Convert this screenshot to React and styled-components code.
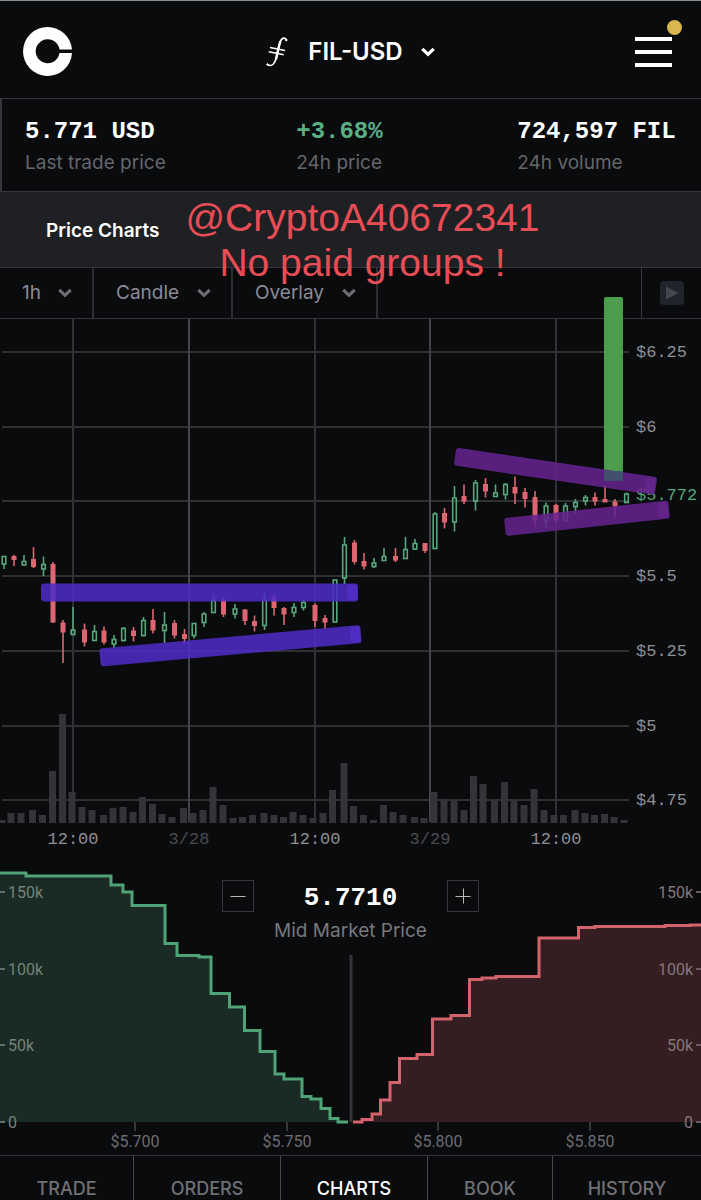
import React from 'react';
import styled, { createGlobalStyle, css } from 'styled-components';

const GlobalStyle = createGlobalStyle`
  * {
    box-sizing: border-box;
  }

  body {
    margin: 0;
    background: #0a0b0d;
    color: #fff;
    font-family: Inter, 'Liberation Sans', sans-serif;
  }

  button, select {
    padding: 0;
    border: none;
    background: none;
    color: inherit;
    font: inherit;
    cursor: pointer;
  }
`;

const Page = styled.div`
  width: 100%;
  overflow: hidden;
`;

const Header = styled.header`
  display: grid;
  grid-template-columns: 1fr auto 1fr;
  align-items: center;
  height: 98px;
  padding: 4px 23px 0;
  border-top: 1px solid #8c9092;
`;

const HomeLink = styled.a`
  display: flex;
  justify-self: start;
`;

const MarketButton = styled.button`
  display: flex;
  align-items: center;
  gap: 18px;
  font-size: 24px;
  line-height: 32px;
  font-weight: 600;
`;

const MarketName = styled.span`
  display: flex;
  align-items: center;
  gap: 20px;
`;

const MenuButton = styled.button`
  position: relative;
  display: flex;
  flex-direction: column;
  gap: 9px;
  width: 37px;
  margin-right: 6px;
  justify-self: end;
`;

const MenuLine = styled.span`
  width: 100%;
  height: 4px;
  background: #fff;
`;

const Badge = styled.span`
  position: absolute;
  top: -17px;
  right: -10px;
  width: 15px;
  height: 15px;
  border-radius: 50%;
  background: #d8b750;
`;

const Stats = styled.section`
  display: grid;
  grid-template-columns: 27fr 22fr 16fr;
  height: 94px;
  padding: 16px 23px 0;
  border: 1px solid #36373c;
  border-left-width: 2px;
  border-right: none;
`;

const StatValue = styled.div`
  font-family: 'Liberation Mono', monospace;
  font-size: 24px;
  line-height: 34px;
  font-weight: bold;
  white-space: nowrap;
  color: ${(props) => (props.$up ? '#5bb083' : '#fff')};
`;

const StatLabel = styled.div`
  font-size: 19px;
  line-height: 28px;
  color: #65666a;
`;

const TitleBar = styled.section`
  position: relative;
  z-index: 1;
  display: flex;
  align-items: center;
  height: 75px;
  padding: 2px 46px 0;
  background: #1f2024;
`;

const Title = styled.h1`
  margin: 0;
  font-size: 19px;
  line-height: 24px;
  font-weight: 600;
`;

const Watermark = styled.p`
  position: absolute;
  top: 3px;
  left: 24px;
  right: 0;
  margin: 0;
  text-align: center;
  font-family: 'Liberation Sans', sans-serif;
  font-size: 39px;
  line-height: 45px;
  color: #e84d56;
  pointer-events: none;
`;

const Toolbar = styled.div`
  display: flex;
  height: 52px;
  border-top: 1px solid #36373c;
  border-bottom: 1px solid #36373c;
`;

const Picker = styled.label`
  display: flex;
  align-items: center;
  gap: 17px;
  padding: 0 20px 0 22px;
  border-right: 2px solid #2d2e33;
  font-size: 19px;
  color: #8a8b96;
`;

const PickerSelect = styled.select`
  appearance: none;
  line-height: 24px;
  outline: none;
`;

const PlayButton = styled.button`
  display: flex;
  align-items: center;
  justify-content: center;
  width: 60px;
  margin-left: auto;
  border-left: 1px solid #36373c;
`;

const ChartSvg = styled.svg`
  position: relative;
  display: block;
  width: 100%;
  height: auto;
  overflow: visible;
`;

const AxisText = styled.text`
  font-family: 'Liberation Mono', monospace;
  font-size: 17px;
  fill: #8f9097;

  ${(props) => props.$dim && css`
    fill: #4b4c51;
  `}

  ${(props) => props.$live && css`
    fill: #55a87b;
  `}
`;

const DepthPanel = styled.section`
  display: grid;
`;

const DepthSvg = styled.svg`
  grid-area: 1 / 1;
  display: block;
  width: 100%;
  height: auto;
`;

const DepthText = styled.text`
  font-family: Roboto, sans-serif;
  font-size: 16px;
  fill: ${(props) => props.$fill || '#6c6d73'};
`;

const MidMarket = styled.div`
  grid-area: 1 / 1;
  justify-self: center;
  align-self: start;
  display: flex;
  flex-direction: column;
  align-items: center;
  gap: 3px;
  padding-top: 20px;
`;

const MidRow = styled.div`
  display: flex;
  align-items: flex-start;
  gap: 50px;
`;

const ZoomButton = styled.button`
  display: flex;
  align-items: center;
  justify-content: center;
  width: 32px;
  height: 32px;
  border: 1px solid #36373c;
`;

const MidPrice = styled.output`
  font-family: 'Liberation Mono', monospace;
  font-size: 26px;
  line-height: 36px;
  font-weight: bold;
`;

const MidLabel = styled.div`
  font-size: 19px;
  line-height: 24px;
  color: #77787c;
`;

const Tabs = styled.nav`
  display: grid;
  grid-template-columns: 133fr 147fr 147fr 125fr 149fr;
  border-top: 1px solid #36373c;
`;

const Tab = styled.a`
  padding-top: 22px;
  text-align: center;
  text-decoration: none;
  font-size: 18px;
  line-height: 22px;
  font-weight: 500;
  color: ${(props) => (props.$active ? '#fff' : '#707175')};

  & + & {
    border-left: 1px solid #46474b;
  }
`;

const UP = '#57a87d';
const DOWN = '#de6670';

// [x, high, low, bodyTop, bodyBottom, up]
const candles = [
  [4, 556, 569, 556, 564, 1],
  [14, 555, 566, 556, 560, 0],
  [24, 555, 565, 561, 565, 1],
  [33.5, 547, 568, 559, 567, 0],
  [43.5, 556.5, 576, 564, 569, 1],
  [53, 562, 623, 564, 622.5, 0],
  [63, 620, 663, 622.5, 632.5, 0],
  [73, 607, 634, 629.5, 634.5, 1],
  [84.5, 623.5, 646.5, 629.5, 642.5, 0],
  [94.5, 625, 641, 631, 640.5, 1],
  [104, 626.5, 644.5, 630.5, 642.5, 0],
  [114, 635, 648, 639, 644, 1],
  [123.5, 627, 641.5, 628, 640.5, 1],
  [133.5, 627, 641.5, 630.5, 636, 0],
  [143.5, 617, 636.5, 620, 635.5, 1],
  [153, 609, 633.5, 620, 630.5, 0],
  [164.5, 612, 643.5, 624.5, 630.5, 1],
  [174.5, 620, 638.5, 623, 635.5, 0],
  [184.5, 629, 644.5, 634, 639, 0],
  [194, 623, 638.5, 623, 635.5, 1],
  [204, 612, 627, 613.5, 622.5, 1],
  [213.5, 594, 612, 600, 612.5, 1],
  [223.5, 598, 617, 600, 614.5, 0],
  [235, 604, 618.5, 608.5, 614, 1],
  [245, 609, 625, 609.5, 621, 0],
  [254.5, 615.5, 631.5, 621, 626, 0],
  [264.5, 592.5, 630, 599.5, 625.5, 1],
  [274, 594, 615.5, 597.5, 608, 0],
  [284, 607, 625, 608, 614.5, 0],
  [294, 603, 617, 607, 612.5, 1],
  [303.5, 600, 610.5, 602, 607.5, 1],
  [315, 603.5, 627, 605, 621, 0],
  [325, 615, 629, 618, 622.5, 0],
  [335, 579.5, 622, 579.5, 622, 1],
  [344.5, 537, 584, 544.5, 578, 1],
  [354.5, 540, 564.5, 542.5, 562, 0],
  [364, 553, 569.5, 561, 566.5, 0],
  [374, 558, 568, 562.5, 566.5, 1],
  [384, 548, 560, 556, 560.5, 1],
  [395.5, 548, 562, 556, 560.5, 0],
  [405.5, 537, 558, 549, 558.5, 1],
  [415, 539, 550, 543, 549, 1],
  [425, 543, 553, 543, 551, 0],
  [435, 512, 548, 513.5, 548.5, 1],
  [444.5, 508, 528.5, 513, 522.5, 0],
  [454.5, 486, 531.5, 497.5, 522, 1],
  [464, 484.5, 504, 496, 501.5, 0],
  [475.5, 480, 510.5, 482.5, 501, 1],
  [485.5, 478, 497.5, 484, 491.5, 0],
  [495.5, 484.5, 496, 492.5, 496.5, 1],
  [505.5, 483, 499.5, 484, 494.5, 1],
  [515, 476.5, 504, 487, 493.5, 0],
  [525, 488, 507.5, 492, 499, 0],
  [535, 491, 526.5, 497, 520.5, 0],
  [546, 502.5, 528, 505.5, 520.5, 1],
  [556, 504, 523, 505, 520.5, 0],
  [565.5, 503, 520, 505.5, 520.5, 1],
  [575.5, 499, 514, 502, 506.5, 1],
  [585.5, 495, 505.5, 497, 501, 1],
  [595, 492.5, 505.5, 497, 501.5, 0],
  [605, 485, 502, 499, 502.5, 0],
  [615, 499, 517, 501.5, 506.5, 0],
  [626.5, 492.5, 502, 493.5, 502.5, 1],
];

// [x, top]
const volumes = [
  [2, 820], [11, 813], [21, 813], [32.5, 810], [42.5, 815], [52.5, 771],
  [62.5, 714], [72, 792], [82, 807], [92, 810], [103.5, 815], [113, 808],
  [123, 807], [133, 812], [142.5, 797], [152.5, 804], [162, 814], [172, 817],
  [183.5, 808], [193, 813], [203, 810], [213, 787], [223, 805], [233, 818],
  [242.5, 817], [252.5, 815], [264, 813], [274, 815], [283.5, 817], [293, 812],
  [303, 815], [313, 818], [323, 813], [332.5, 790], [344, 763], [353.5, 806],
  [363.5, 815], [373.5, 820], [383.5, 805], [393, 812], [403, 815], [414.5, 817],
  [424, 818], [434, 792], [444, 799], [454, 800], [464, 810], [473.5, 776],
  [483, 784], [494.5, 800], [504.5, 782], [514, 800], [524, 805], [534, 789],
  [544, 810], [554, 815], [563.5, 815], [575, 810], [585, 813], [594.5, 815],
  [604.5, 814], [614, 817], [624, 820],
];

const priceLines = [
  [352, '$6.25'],
  [427, '$6'],
  [501, null],
  [576, '$5.5'],
  [651, '$5.25'],
  [726, '$5'],
  [800, '$4.75'],
];

const timeLines = [
  [73, '12:00', false],
  [189, '3/28', true],
  [315, '12:00', false],
  [430, '3/29', true],
  [556, '12:00', false],
];

const bids = 'M0 873H26V876H111V885H123V892H132V905.5H165V943.5H177V955.5H199V957H211V993.5H229.5V1007H244.5V1030.5H260V1051.5H275V1074H284V1079H302V1096.5H311V1099H321V1108.5H330V1118.5H338V1122H348';
const asks = 'M353 1122H362V1119.5H372V1114H380.5V1100H390V1082.5H399.5V1058.5H417V1054.5H432.5V1019H451V1015.5H469.5V979.5H482V978H496V976.5H539V938H578.5V927.5H595V926.5H665V925.5H690V925H701';

const depthLevels = [
  [892, '150k'],
  [969, '100k'],
  [1045, '50k'],
  [1122, '0'],
];

const depthPrices = [
  [135, '$5.700'],
  [287, '$5.750'],
  [438, '$5.800'],
  [590, '$5.850'],
];

const tabs = ['TRADE', 'ORDERS', 'CHARTS', 'BOOK', 'HISTORY'];

const Chevron = ({ color }) => (
  <svg width="14" height="10" viewBox="0 0 14 10" fill="none" aria-hidden="true">
    <path d="M1.3 1.8 7 7.3l5.7-5.5" stroke={color} strokeWidth="3.2" />
  </svg>
);

const Logo = () => (
  <svg width="49" height="49" viewBox="0 0 49 49" aria-hidden="true">
    <path
      fill="#fff"
      d="M24.5 0A24.5 24.5 0 1 0 49 26H36.5a12 12 0 1 1 0-3.500H49A24.500 24.500 0 0 0 24.500 0Z"
    />
  </svg>
);

const FilecoinIcon = () => (
  <svg width="22" height="32" viewBox="0 0 22 32" fill="none" stroke="#fff" strokeLinecap="round" aria-hidden="true">
    <path d="M20.3 4.500C20 1.200 15.800.8 13.900 6.500 12.500 10.800 11.600 16 10.400 21.200 9 27.300 6.200 31.500 1.300 28.500" strokeWidth="1.6" />
    <path d="M14.2 6C12.700 10.800 11.600 16 10.200 22.500" strokeWidth="2.4" />
    <path d="M4 11.500l15 3M2.700 15.800l15 3" strokeWidth="1.6" strokeLinecap="butt" />
    <circle cx="20.2" cy="4" r=".7" fill="#fff" />
    <circle cx="1.5" cy="28.4" r=".7" fill="#fff" />
  </svg>
);

const PlayIcon = () => (
  <svg width="26" height="26" viewBox="0 0 26 26" aria-hidden="true">
    <rect x="1" y="1" width="24" height="24" rx="4" fill="#20252b" />
    <path d="M7 6.5 19.5 13 7 19.5Z" fill="#44474b" />
  </svg>
);

const Candle = ({ data }) => {
  const [x, high, low, top, bottom, up] = data;
  if (up) {
    return (
      <g stroke={UP} strokeWidth="1.6" fill="none">
        <path d={`M${x} ${high}V${top}M${x} ${bottom}V${Math.max(low, bottom)}`} />
        <rect x={x - 1.8} y={top + 0.5} width="3.6" height={bottom - top - 0.5} />
      </g>
    );
  }
  return (
    <g fill={DOWN}>
      <rect x={x - 0.8} y={high} width="1.6" height={low - high} />
      <rect x={x - 2.5} y={top} width="5" height={bottom - top} />
    </g>
  );
};

// marker stroke drawn over the candles
const Marker = ({ from, to, fill, edge }) => {
  const [x1, y1] = from;
  const [x2, y2] = to;
  const length = Math.hypot(x2 - x1, y2 - y1);
  const angle = (Math.atan2(y2 - y1, x2 - x1) * 180) / Math.PI;

  return (
    <g transform={`translate(${x1} ${y1}) rotate(${angle})`} fillOpacity="0.87">
      <rect y="-9" width={length} height="18" rx="3" fill={fill} />
      <rect x={length - 11} y="-8" width="10" height="16" rx="3" fill={edge} fillOpacity="0.5" />
    </g>
  );
};

const PriceChart = () => (
  <ChartSvg viewBox="0 319 701 541" role="img" aria-label="FIL-USD price chart">
    <g stroke="#2e3032" strokeWidth="2">
      {priceLines.map(([y]) => <path key={y} d={`M2 ${y}H629`} />)}
    </g>
    {timeLines.map(([x, label, day]) => (
      <path key={x} d={`M${x} 319V822`} stroke={day ? '#434448' : '#303134'} strokeWidth="2" />
    ))}
    <g fill="#33343a">
      {volumes.map(([x, y]) => (
        <rect key={x} x={x - 3.5} y={y} width="7" height={823 - y} />
      ))}
    </g>
    {candles.map((c) => <Candle key={c[0]} data={c} />)}
    {priceLines.map(([y, label]) => label && (
      <AxisText key={y} x="636" y={y + 5}>{label}</AxisText>
    ))}
    <AxisText x="636" y="500" $live>$5.772</AxisText>
    {timeLines.map(([x, label, day]) => (
      <AxisText key={x} x={x} y="844" textAnchor="middle" $dim={day}>{label}</AxisText>
    ))}

    <Marker from={[41, 592.5]} to={[358, 592.5]} fill="#4e2cc4" edge="#5a34dc" />
    <Marker from={[100, 657.5]} to={[361, 634]} fill="#4e2cc4" edge="#5a34dc" />
    <rect x="604" y="297" width="19" height="183" rx="2" fill="#4ea24f" fillOpacity="0.96" />
    <path d="M610 299V480M616 299V480" stroke="#62a957" strokeOpacity="0.4" />
    <Marker from={[455, 456.5]} to={[656, 486]} fill="#65228f" edge="#6d2a96" />
    <Marker from={[505, 527]} to={[669, 509.5]} fill="#65228f" edge="#6d2a96" />
    <rect x="604" y="471" width="19" height="10" fill="#3d5568" fillOpacity="0.85" />
  </ChartSvg>
);

const DepthChart = () => (
  <DepthSvg viewBox="0 860 701 295" role="img" aria-label="FIL-USD market depth">
    <path d={`${bids}H0Z`} fill="#192b24" />
    <path d={`${asks}V1122Z`} fill="#351e22" />
    <path d="M351 955V1122" stroke="#343538" strokeWidth="3" />
    <path d={bids} fill="none" stroke="#4fa376" strokeWidth="3" />
    <path d={asks} fill="none" stroke="#d3636c" strokeWidth="3" />
    {depthLevels.map(([y, label]) => (
      <g key={y}>
        <path d={`M0 ${y}H5`} stroke="#5f7068" strokeWidth="2" />
        <DepthText x="8" y={y + 6} $fill="#72837c">{label}</DepthText>
        <path d={`M696 ${y}H701`} stroke="#6b5d61" strokeWidth="2" />
        <DepthText x="693" y={y + 6} textAnchor="end" $fill="#83777c">{label}</DepthText>
      </g>
    ))}
    {depthPrices.map(([x, label]) => (
      <g key={x}>
        <path d={`M${x} 1122V1131`} stroke="#36373a" strokeWidth="2" />
        <DepthText x={x} y="1147" textAnchor="middle">{label}</DepthText>
      </g>
    ))}
  </DepthSvg>
);

const Dropdown = ({ name, value }) => (
  <Picker>
    <PickerSelect aria-label={name} defaultValue={value}>
      <option>{value}</option>
    </PickerSelect>
    <Chevron color="#6d6e72" />
  </Picker>
);

const Stat = ({ value, label, up }) => (
  <div>
    <StatValue $up={up}>{value}</StatValue>
    <StatLabel>{label}</StatLabel>
  </div>
);

const App = () => (
  <Page>
    <GlobalStyle />
    <Header>
      <HomeLink href="#home" aria-label="Home"><Logo /></HomeLink>
      <MarketButton type="button">
        <MarketName>
          <FilecoinIcon />
          FIL-USD
        </MarketName>
        <Chevron color="#fff" />
      </MarketButton>
      <MenuButton type="button" aria-label="Menu">
        <MenuLine />
        <MenuLine />
        <MenuLine />
        <Badge />
      </MenuButton>
    </Header>
    <Stats>
      <Stat value="5.771 USD" label="Last trade price" />
      <Stat value="+3.68%" label="24h price" up />
      <Stat value="724,597 FIL" label="24h volume" />
    </Stats>
    <TitleBar>
      <Title>Price Charts</Title>
      <Watermark>
        @CryptoA40672341
        <br />
        No paid groups !
      </Watermark>
    </TitleBar>
    <Toolbar>
      <Dropdown name="Interval" value="1h" />
      <Dropdown name="Chart type" value="Candle" />
      <Dropdown name="Overlay" value="Overlay" />
      <PlayButton type="button" aria-label="Play"><PlayIcon /></PlayButton>
    </Toolbar>
    <PriceChart />
    <DepthPanel>
      <DepthChart />
      <MidMarket>
        <MidRow>
          <ZoomButton type="button" aria-label="Zoom out">
            <svg width="16" height="16" viewBox="0 0 16 16" stroke="#b5b6b8" aria-hidden="true">
              <path d="M.5 8.500H15.500" />
            </svg>
          </ZoomButton>
          <MidPrice>5.7710</MidPrice>
          <ZoomButton type="button" aria-label="Zoom in">
            <svg width="16" height="16" viewBox="0 0 16 16" stroke="#b5b6b8" aria-hidden="true">
              <path d="M.5 8.500H15.500M8.500 .5V15.500" />
            </svg>
          </ZoomButton>
        </MidRow>
        <MidLabel>Mid Market Price</MidLabel>
      </MidMarket>
    </DepthPanel>
    <Tabs>
      {tabs.map((tab) => (
        <Tab key={tab} href={`#${tab.toLowerCase()}`} $active={tab === 'CHARTS'}>{tab}</Tab>
      ))}
    </Tabs>
  </Page>
);

export default App;
